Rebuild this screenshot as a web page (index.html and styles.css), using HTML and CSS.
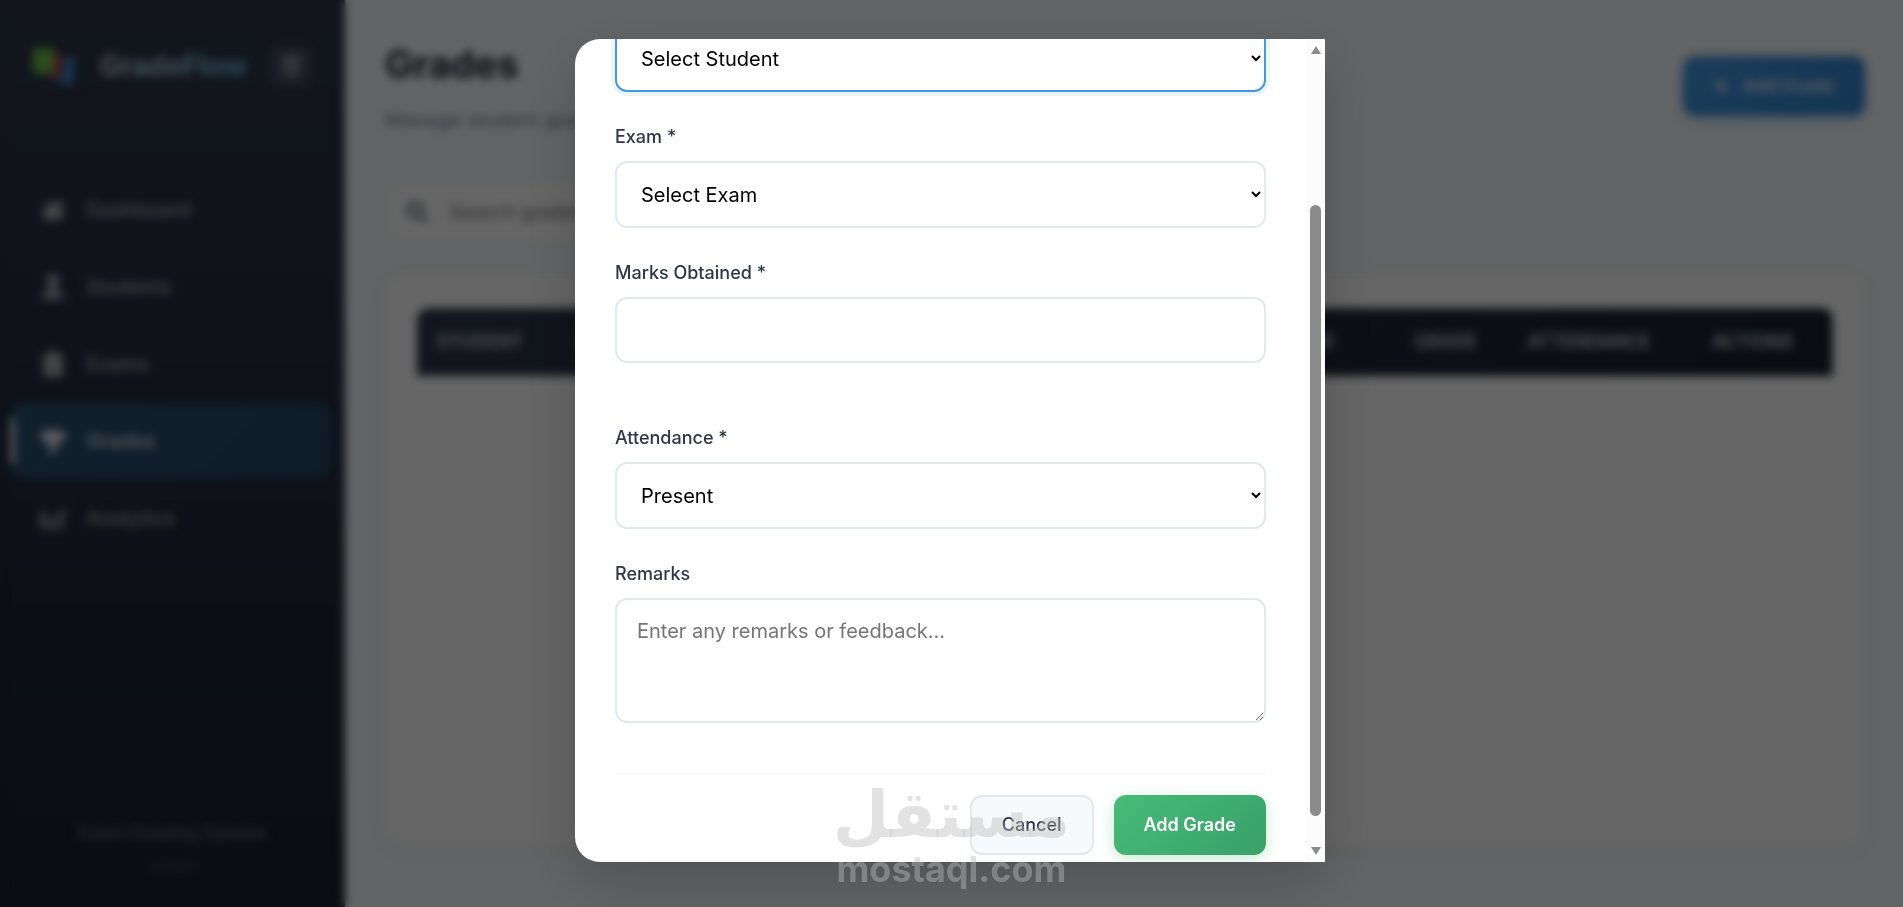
FILE: index.html
```html
<!DOCTYPE html>
<html lang="en">
<head>
    <meta charset="UTF-8">
    <meta name="viewport" content="width=device-width, initial-scale=1.0">
    <title>Grades | GradeFlow</title>
    <link rel="stylesheet" href="styles.css">
</head>
<body>
    <div class="app">
        <aside class="sidebar">
            <div class="sidebar-header">
                <svg class="logo-icon" viewBox="0 0 44 44" aria-hidden="true">
                    <rect x="1" y="4" width="21" height="26" rx="3" fill="#6abf4b"/>
                    <path d="M22 9l8 3-2 24-14-5 8-2z" fill="#c53a4c"/>
                    <path d="M33 12l10 3-3 27-18-6 9-3z" fill="#3d8fd1"/>
                </svg>
                <span class="logo-text">GradeFlow</span>
                <button class="sidebar-toggle" type="button" aria-label="Toggle sidebar">☰</button>
            </div>
            <nav class="sidebar-nav">
                <a href="#dashboard" class="nav-item">
                    <svg viewBox="0 0 24 24"><path d="M2 12l8-8h2v4l4-4h5v17H3v-8z"/></svg>
                    <span>Dashboard</span>
                </a>
                <a href="#students" class="nav-item">
                    <svg viewBox="0 0 24 24"><circle cx="12" cy="6" r="6"/><path d="M9 11h6v4l7 3v5H2v-5l7-3z"/></svg>
                    <span>Students</span>
                </a>
                <a href="#exams" class="nav-item">
                    <svg viewBox="0 0 24 24"><path d="M3 3h5V0h8v3h5v21H3z"/></svg>
                    <span>Exams</span>
                </a>
                <a href="#grades" class="nav-item active">
                    <svg viewBox="0 0 24 24"><path d="M5 2h14v2h5c0 6-3 9-7 10l-3 3v3h2v3H8v-3h2v-3l-3-3C3 13 0 10 0 4h5z"/></svg>
                    <span>Grades</span>
                </a>
                <a href="#analytics" class="nav-item">
                    <svg viewBox="0 0 24 24"><path d="M0 4h3v15h21v3H0zM5 10h4v7H5zM11 13h3v4h-3zM16 9l6-5h2v4l-4 4v5h-4z"/></svg>
                    <span>Analytics</span>
                </a>
            </nav>
            <div class="sidebar-footer">
                <p>Exam Grading System</p>
                <p class="version">v1.0.0</p>
            </div>
        </aside>

        <main class="main-content">
            <header class="page-header">
                <div>
                    <h1>Grades</h1>
                    <p>Manage student grades</p>
                </div>
                <button class="btn btn-primary" type="button">
                    <svg viewBox="0 0 16 16" aria-hidden="true"><path d="M8 1v14M1 8h14"/></svg>
                    Add Grade
                </button>
            </header>

            <div class="search-box">
                <svg viewBox="0 0 24 24" aria-hidden="true"><circle cx="10" cy="10" r="7"/><path d="M15 15l7 7"/></svg>
                <input type="text" placeholder="Search grades..." aria-label="Search grades">
            </div>

            <section class="table-card">
                <table class="grades-table">
                    <thead>
                        <tr>
                            <th class="col-student">Student</th>
                            <th>Exam</th>
                            <th>Subject</th>
                            <th>Marks</th>
                            <th class="col-percentage">Percentage</th>
                            <th class="col-grade">Grade</th>
                            <th class="col-attendance">Attendance</th>
                            <th class="col-actions">Actions</th>
                        </tr>
                    </thead>
                    <tbody></tbody>
                </table>
            </section>
        </main>
    </div>

    <div class="modal-overlay">
        <div class="modal" role="dialog" aria-labelledby="modalTitle">
            <div class="modal-scroll" id="modalScroll">
                <div class="modal-header">
                    <h2 id="modalTitle">Add Grade</h2>
                </div>
                <form>
                    <div class="form-group">
                        <label for="student">Student *</label>
                        <select id="student" required>
                            <option value="">Select Student</option>
                        </select>
                    </div>
                    <div class="form-group">
                        <label for="exam">Exam *</label>
                        <select id="exam" required>
                            <option value="">Select Exam</option>
                        </select>
                    </div>
                    <div class="form-group">
                        <label for="marks">Marks Obtained *</label>
                        <input type="number" id="marks" required>
                        <div class="form-hint"></div>
                    </div>
                    <div class="form-group">
                        <label for="attendance">Attendance *</label>
                        <select id="attendance" required>
                            <option value="present">Present</option>
                            <option value="absent">Absent</option>
                        </select>
                    </div>
                    <div class="form-group">
                        <label for="remarks">Remarks</label>
                        <textarea id="remarks" placeholder="Enter any remarks or feedback..."></textarea>
                    </div>
                    <div class="modal-footer">
                        <button class="btn btn-secondary" type="button">Cancel</button>
                        <button class="btn btn-success" type="submit">Add Grade</button>
                    </div>
                </form>
            </div>
            <div class="scrollbar" aria-hidden="true">
                <svg viewBox="0 0 10 8"><path d="M5 0l5 8H0z"/></svg>
                <div class="scrollbar-track">
                    <div class="scrollbar-thumb" id="modalThumb"></div>
                </div>
                <svg viewBox="0 0 10 8"><path d="M5 8l5-8H0z"/></svg>
            </div>
        </div>
    </div>

    <div class="watermark">
        <span class="watermark-ar" lang="ar">مستقل</span>
        <span class="watermark-en">mostaql.com</span>
    </div>

<script>
  const scroller = document.getElementById('modalScroll');
  const thumb = document.getElementById('modalThumb');

  // Keep the thumb in step with the form
  function updateThumb() {
    thumb.style.height = (scroller.clientHeight / scroller.scrollHeight * 100) + '%';
    thumb.style.marginTop = (scroller.scrollTop / scroller.scrollHeight * thumb.parentNode.clientHeight) + 'px';
  }

  scroller.addEventListener('scroll', updateThumb);
  document.getElementById('student').focus({ preventScroll: true });
  scroller.scrollTop = scroller.scrollHeight - scroller.clientHeight - 33;
  updateThumb();
</script>
</body>
</html>
```
FILE: styles.css
```css
* {
    box-sizing: border-box;
    margin: 0;
    padding: 0;
}
body {
    font-family: Inter, "Liberation Sans", sans-serif;
    font-size: 20px;
    line-height: 1.6;
    color: #2d3748;
    background-color: #f7fafc;
    overflow: hidden;
}
.app {
    display: flex;
    height: 100vh;
}

/* Sidebar */
.sidebar {
    width: 345px;
    flex-shrink: 0;
    display: flex;
    flex-direction: column;
    background: linear-gradient(180deg, #2d3748 0%, #1a202c 100%);
    color: #fff;
}
.sidebar-header {
    display: flex;
    align-items: center;
    height: 132px;
    padding: 0 32px;
}
.logo-icon {
    width: 44px;
    height: 44px;
    margin-right: 24px;
}
.logo-text {
    flex: 1;
    font-size: 28px;
    font-weight: 700;
    background: linear-gradient(90deg, #cbd5e0, #63b3ed);
    background-clip: text;
    color: transparent;
}
.sidebar-toggle {
    width: 44px;
    height: 44px;
    border: none;
    border-radius: 10px;
    background: rgba(255, 255, 255, 0.1);
    color: #fff;
    font-size: 24px;
}
.sidebar-nav {
    flex: 1;
    display: flex;
    flex-direction: column;
    gap: 1px;
    padding: 40px 14px 0 10px;
}
.nav-item {
    position: relative;
    display: flex;
    align-items: center;
    gap: 20px;
    height: 76px;
    padding: 0 30px;
    border-radius: 15px;
    color: rgba(255, 255, 255, 0.6);
    font-size: 20px;
    font-weight: 500;
    text-decoration: none;
}
.nav-item svg {
    width: 26px;
    height: 26px;
    fill: currentColor;
}
.nav-item.active {
    background: linear-gradient(135deg, #2a5070, #264766);
    color: #e2e8f0;
}
.nav-item.active::before {
    content: "";
    position: absolute;
    left: 0;
    top: 15px;
    bottom: 15px;
    width: 5px;
    border-radius: 3px;
    background: #e2e8f0;
}
.sidebar-footer {
    padding-bottom: 26px;
    text-align: center;
    font-size: 18px;
    color: rgba(255, 255, 255, 0.4);
}
.sidebar-footer .version {
    margin-top: 4px;
    color: rgba(255, 255, 255, 0.25);
}

/* Page */
.main-content {
    flex: 1;
    display: flex;
    flex-direction: column;
    padding: 34px 38px 62px 40px;
}
.page-header {
    display: flex;
    justify-content: space-between;
    align-items: flex-start;
    margin-bottom: 44px;
}
.page-header h1 {
    font-size: 38px;
    line-height: 60px;
    font-weight: 700;
    color: #1a202c;
}
.page-header p {
    margin-top: 10px;
    color: #718096;
}
.search-box {
    display: flex;
    align-items: center;
    gap: 20px;
    width: 500px;
    height: 64px;
    margin-bottom: 31px;
    padding: 0 18px;
    background: #fff;
    border: 2px solid #edf2f7;
    border-radius: 15px;
}
.search-box svg {
    width: 24px;
    height: 24px;
    fill: none;
    stroke: #4a5568;
    stroke-width: 3;
}
.search-box input {
    flex: 1;
    border: none;
    outline: none;
    font: inherit;
}
.table-card {
    flex: 1;
    padding: 33px 32px;
    background: #fff;
    border-radius: 20px;
    box-shadow: 0 4px 20px rgba(0, 0, 0, 0.06);
}
.grades-table {
    width: 100%;
    table-layout: fixed;
    border-collapse: collapse;
    border-radius: 12px 12px 0 0;
    overflow: hidden;
}
.grades-table thead {
    background: linear-gradient(135deg, #2d3748, #1a202c);
}
.grades-table th {
    height: 68px;
    padding: 0 20px;
    text-align: left;
    text-transform: uppercase;
    font-size: 18px;
    font-weight: 600;
    color: #cbd5e0;
}
.col-student { width: 10%; }
.col-percentage { width: 14%; }
.col-grade { width: 8%; }
.col-attendance { width: 13%; }
.col-actions { width: 10%; }

/* Buttons */
.btn {
    height: 60px;
    padding: 0 30px;
    border: none;
    border-radius: 12px;
    font: inherit;
    font-size: 18px;
    font-weight: 600;
    cursor: pointer;
}
.btn-primary {
    display: flex;
    align-items: center;
    gap: 14px;
    margin-top: 22px;
    background: linear-gradient(135deg, #4299e1, #3182ce);
    color: #e2e8f0;
    box-shadow: 0 4px 15px rgba(66, 153, 225, 0.3);
}
.btn-primary svg {
    width: 16px;
    height: 16px;
    stroke: currentColor;
    stroke-width: 3;
}
.btn-secondary {
    border: 2px solid #e2e8f0;
    background: #f7fafc;
    color: #2d3748;
    font-weight: 500;
}
.btn-success {
    background: linear-gradient(135deg, #48bb78, #38a169);
    color: #fff;
    box-shadow: 0 4px 15px rgba(72, 187, 120, 0.3);
}

/* Modal */
.modal-overlay {
    position: fixed;
    inset: 0;
    display: flex;
    justify-content: center;
    align-items: center;
    padding: 39px 23px 45px 20px;
    background: rgba(0, 0, 0, 0.6);
    backdrop-filter: blur(5px);
}
.modal {
    display: flex;
    width: 100%;
    max-width: 750px;
    height: 100%;
    overflow: hidden;
    background: #fff;
    border-radius: 25px 0 0 25px;
    box-shadow: 0 20px 60px rgba(0, 0, 0, 0.2);
}
.modal-scroll {
    flex: 1;
    padding: 40px;
    overflow-y: auto;
    scrollbar-width: none;
}
.modal-header {
    margin-bottom: 30px;
    padding-bottom: 30px;
    border-bottom: 2px solid #f7fafc;
}
.modal-header h2 {
    font-size: 28px;
    line-height: 45px;
}
.form-group {
    margin-bottom: 30px;
}
.form-group label {
    display: block;
    margin-bottom: 10px;
    font-size: 18px;
    font-weight: 500;
    line-height: 29px;
}
.form-group input,
.form-group select,
.form-group textarea {
    display: block;
    width: 100%;
    height: 67px;
    padding: 15px 20px;
    border: 2px solid #e2e8f0;
    border-radius: 12px;
    background: #fff;
    font: inherit;
    color: #000;
    outline: none;
}
.form-group input {
    height: 66px;
}
.form-group textarea {
    height: 125px;
    resize: vertical;
}
.form-group textarea::placeholder {
    color: #757575;
}
.form-group select:focus {
    border-color: #4299e1;
    box-shadow: 0 0 0 4px rgba(66, 153, 225, 0.1);
}
.form-hint {
    height: 30px;
}
.modal-footer {
    display: flex;
    justify-content: flex-end;
    gap: 20px;
    margin-top: 50px;
    padding-top: 20px;
    border-top: 2px solid #f7fafc;
}
.scrollbar {
    width: 19px;
    display: flex;
    flex-direction: column;
    align-items: center;
    padding: 7px 0;
    background: #fcfcfc;
}
.scrollbar svg {
    width: 10px;
    height: 8px;
    fill: #8b8b8b;
}
.scrollbar-track {
    flex: 1;
    width: 11px;
    margin: 2px 0 6px;
}
.scrollbar-thumb {
    border-radius: 6px;
    background: #8b8b8b;
}

/* Watermark */
.watermark {
    position: fixed;
    left: 0;
    right: 0;
    bottom: 18px;
    display: flex;
    flex-direction: column;
    align-items: center;
    color: rgba(188, 188, 188, 0.43);
    font-weight: 700;
    pointer-events: none;
}
.watermark-ar {
    font-family: "DejaVu Sans", sans-serif;
    font-size: 65px;
    line-height: 68px;
}
.watermark-en {
    font-size: 36px;
    line-height: 40px;
}
```
